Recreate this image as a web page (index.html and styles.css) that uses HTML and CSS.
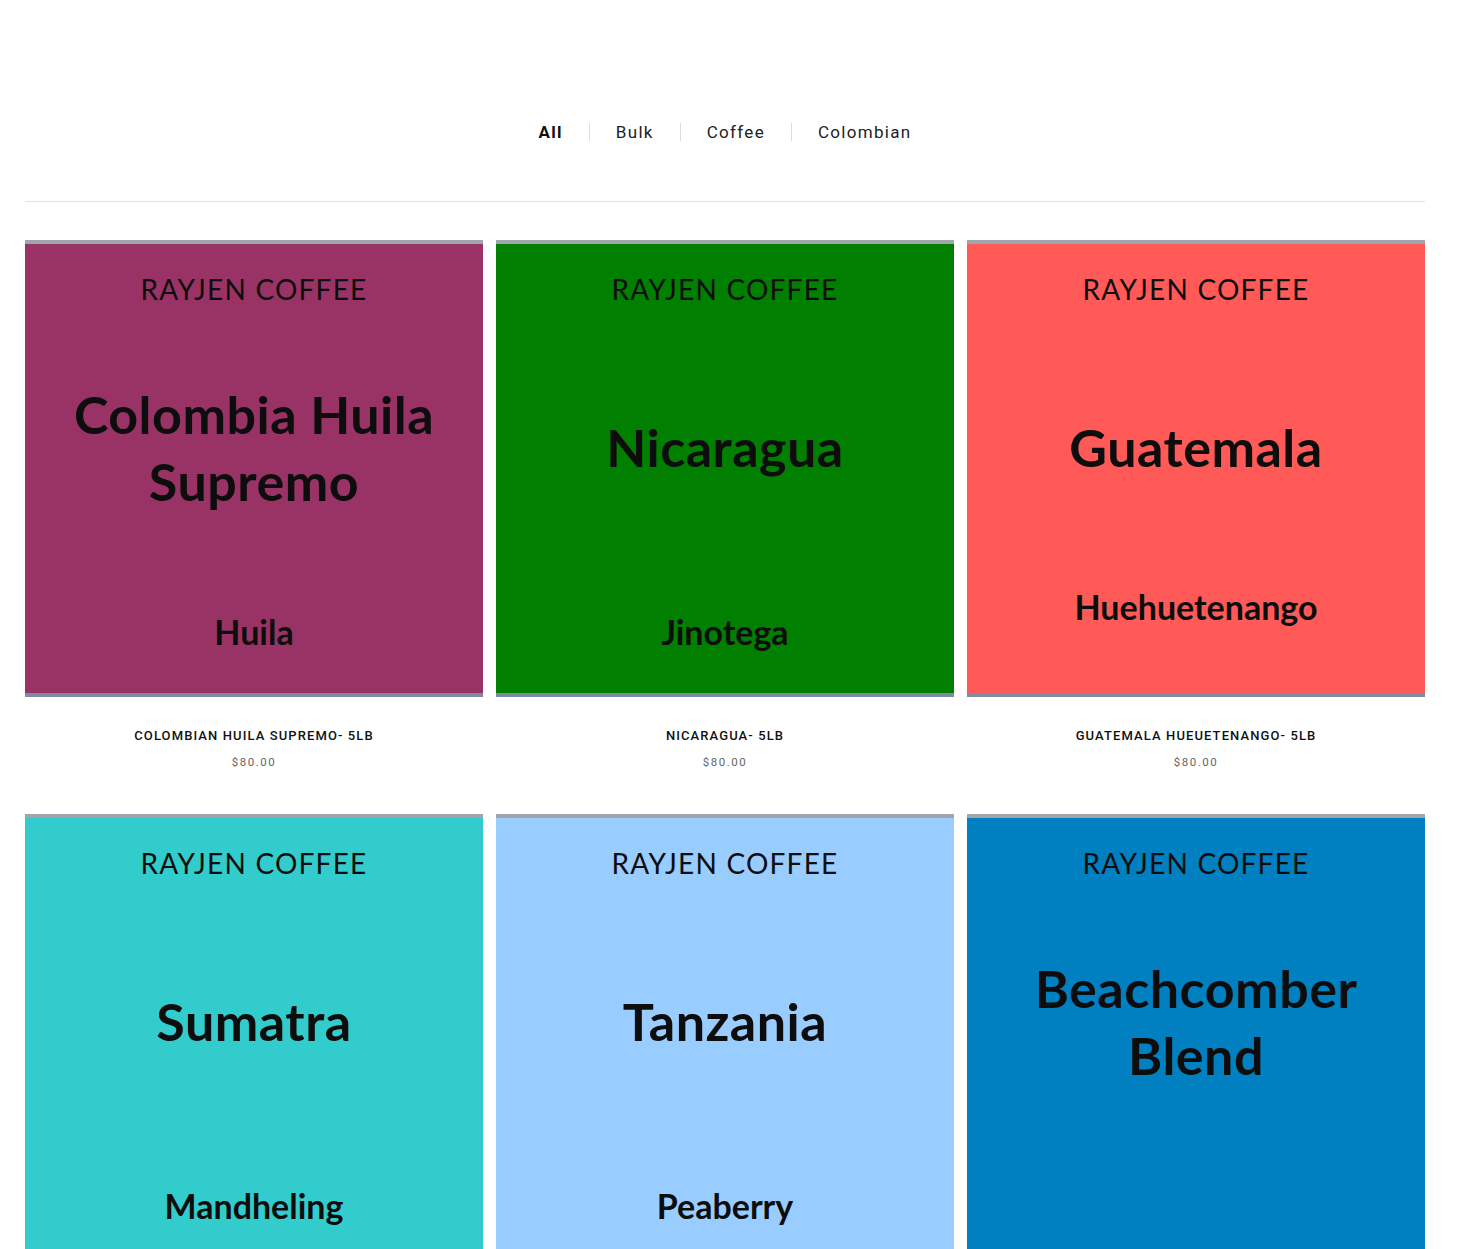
FILE: index.html
```html
<!DOCTYPE html>
<html lang="en">

<head>
    <title>Shop - Rayjen Coffee</title>
    <meta charset="utf-8">
    <meta name="viewport" content="width=device-width, initial-scale=1">
    <link rel="stylesheet" href="styles.css">
</head>

<body>

    <main class="shop">

        <nav class="filters">
            <a href="#" class="filter active">All</a>
            <span class="sep"></span>
            <a href="#" class="filter">Bulk</a>
            <span class="sep"></span>
            <a href="#" class="filter">Coffee</a>
            <span class="sep"></span>
            <a href="#" class="filter">Colombian</a>
        </nav>

        <hr class="divider">

        <section class="products">

            <article class="product">
                <div class="art art-plum">
                    <div class="brand">RAYJEN COFFEE</div>
                    <div class="name">Colombia Huila Supremo</div>
                    <div class="origin">Huila</div>
                </div>
                <h2 class="title">COLOMBIAN HUILA SUPREMO- 5LB</h2>
                <div class="price">$80.00</div>
            </article>

            <article class="product">
                <div class="art art-green">
                    <div class="brand">RAYJEN COFFEE</div>
                    <div class="name">Nicaragua</div>
                    <div class="origin">Jinotega</div>
                </div>
                <h2 class="title">NICARAGUA- 5LB</h2>
                <div class="price">$80.00</div>
            </article>

            <article class="product">
                <div class="art art-red">
                    <div class="brand">RAYJEN COFFEE</div>
                    <div class="name">Guatemala</div>
                    <div class="origin high">Huehuetenango</div>
                </div>
                <h2 class="title">GUATEMALA HUEUETENANGO- 5LB</h2>
                <div class="price">$80.00</div>
            </article>

            <article class="product">
                <div class="art art-teal">
                    <div class="brand">RAYJEN COFFEE</div>
                    <div class="name">Sumatra</div>
                    <div class="origin">Mandheling</div>
                </div>
                <h2 class="title">SUMATRA MANDHELING- 5LB</h2>
                <div class="price">$80.00</div>
            </article>

            <article class="product">
                <div class="art art-sky">
                    <div class="brand">RAYJEN COFFEE</div>
                    <div class="name">Tanzania</div>
                    <div class="origin">Peaberry</div>
                </div>
                <h2 class="title">TANZANIA PEABERRY- 5LB</h2>
                <div class="price">$80.00</div>
            </article>

            <article class="product">
                <div class="art art-blue">
                    <div class="brand">RAYJEN COFFEE</div>
                    <div class="name">Beachcomber Blend</div>
                    <div class="origin"></div>
                </div>
                <h2 class="title">BEACHCOMBER BLEND- 5LB</h2>
                <div class="price">$80.00</div>
            </article>

        </section>

    </main>

</body>

</html>
```

FILE: styles.css
```css
body {
    background: #fff;
    color: #111;
    font-family: Roboto, "Liberation Sans", sans-serif;
    margin: 0;
}

.shop {
    margin: 0 0 0 25px;
    padding: 120px 0 0 0;
    width: 1400px;
}

.filters {
    align-items: center;
    display: flex;
    justify-content: center;
    gap: 26px;
    height: 24px;
}

.filter {
    color: #222;
    font-size: 17px;
    letter-spacing: 1.3px;
    line-height: 24px;
    text-decoration: none;
}

.filter.active {
    color: #111;
    font-weight: 700;
}

.sep {
    background: #ddd;
    display: block;
    height: 18px;
    width: 1px;
}

.divider {
    border: 0;
    border-top: 1px solid #e1e1e1;
    margin: 57px 0 38px 0;
}

.products {
    display: grid;
    grid-template-columns: repeat(3, 1fr);
    column-gap: 13px;
    row-gap: 44px;
}

.product {
    text-align: center;
}

.art {
    border-top: 4px solid #a1a5ad;
    border-bottom: 4px solid #7d8ba3;
    box-sizing: border-box;
    color: #0d0d0d;
    display: grid;
    font-family: Lato, "Open Sans", sans-serif;
    grid-template-rows: 86px 1fr 128px;
    height: 457px;
}

.art-plum { background: #993366; }
.art-green { background: #007f00; }
.art-red { background: #ff5a58; }
.art-teal { background: #33cccc; }
.art-sky { background: #99ccff; }
.art-blue { background: #0080c0; }

.brand {
    align-self: center;
    font-size: 28px;
    letter-spacing: 1.2px;
    padding: 4px 0 0 0;
}

.name {
    align-self: center;
    font-size: 52px;
    font-weight: 700;
    letter-spacing: 0.5px;
    line-height: 67px;
    margin: 0 auto;
    max-width: 390px;
}

.origin {
    align-self: center;
    font-size: 34px;
    font-weight: 700;
    padding: 4px 0 0 0;
}

.origin.high {
    margin: 0 0 50px 0;
}

.title {
    font-size: 13px;
    font-weight: 500;
    letter-spacing: 1.1px;
    line-height: 16px;
    margin: 31px 0 0 0;
}

.price {
    color: #666;
    font-size: 11.5px;
    letter-spacing: 1.5px;
    line-height: 16px;
    margin: 10px 0 0 0;
}
```
